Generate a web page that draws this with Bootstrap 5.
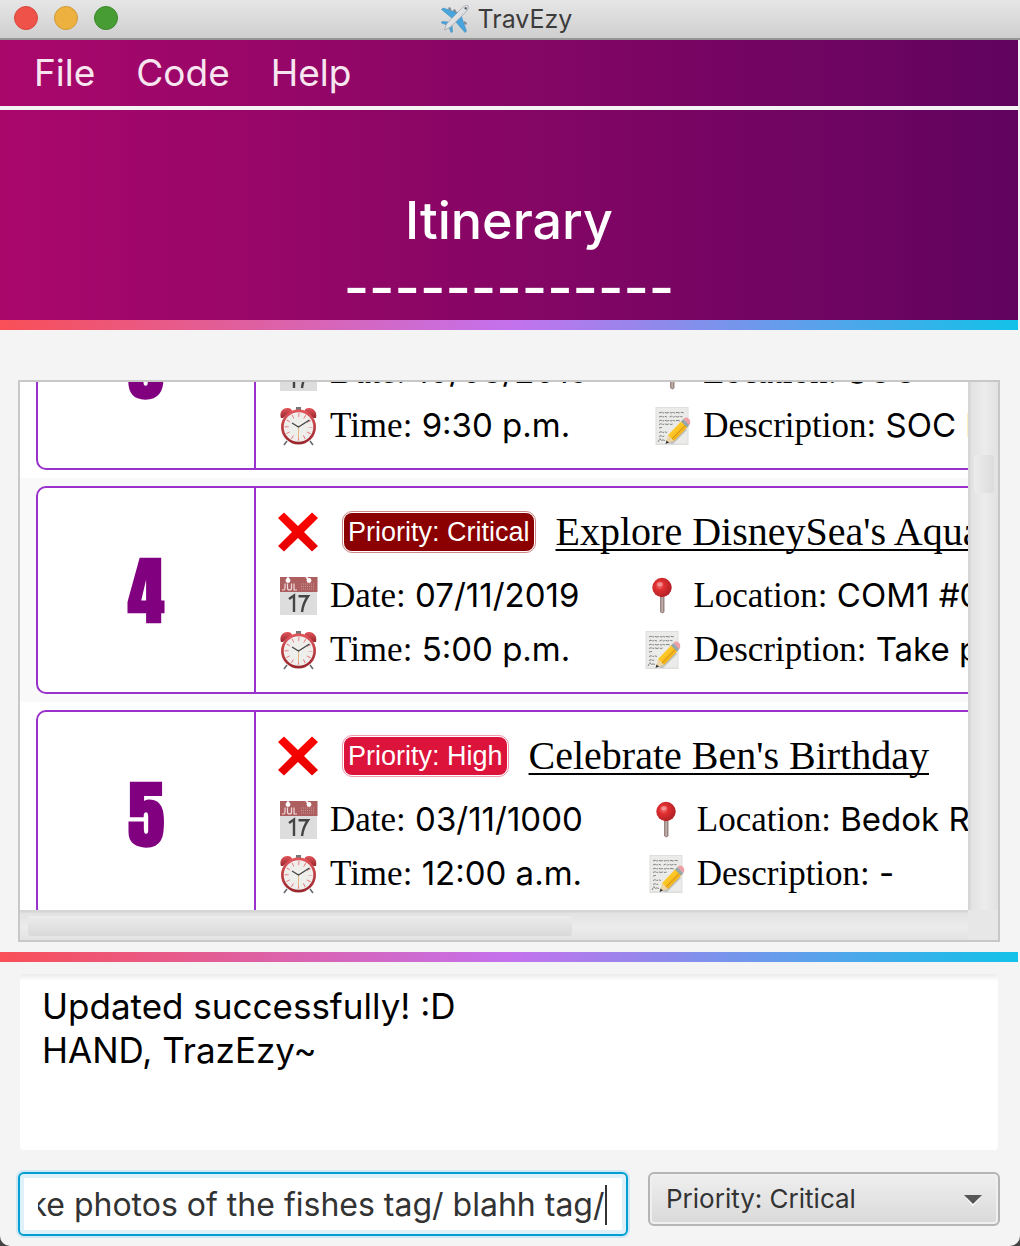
<!DOCTYPE html>
<html lang="en">
<head>
<meta charset="utf-8">
<meta name="viewport" content="width=device-width, initial-scale=1">
<title>TravEzy</title>
<link href="https://cdn.jsdelivr.net/npm/bootstrap@5.3.0/dist/css/bootstrap.min.css" rel="stylesheet">
<style>
  html { background: #444; }
  body { background: #444; font-family: Inter, Roboto, sans-serif; color: #000; }
  .app-window { background: #f4f4f4; min-height: 100vh; padding-right: 2px; border-radius: 0 0 10px 10px; overflow: hidden; }
  .title-bar { height: 40px; margin-right: -2px; padding-right: 8px; background: linear-gradient(#e6e6e6, #cfcfcf); border-bottom: 2px solid #959595; color: #3c3c3c; }
  .title-text { margin: 0; font-size: 25px; line-height: 38px; font-weight: 400; }
  .lights { left: 14px; top: 6px; gap: 16px; }
  .light { width: 24px; height: 24px; border-radius: 50%; border: 1px solid; padding: 0; }
  .light-red { background: #ee5249; border-color: #d8473f; }
  .light-amber { background: #ecb13e; border-color: #cf9a38; }
  .light-green { background: #479c33; border-color: #3c882b; }
  .aubergine { background: linear-gradient(90deg, #aa076b, #61045f); }
  .menu-strip { height: 66px; padding: 0 34px; gap: 41px; margin-bottom: 4px; }
  .menu-strip .nav-link { padding: 0; font-size: 37px; line-height: 66px; color: #f7e6f0; }
  .banner { height: 210px; padding-top: 78px; color: #fff; }
  .banner h1, .banner p { line-height: 66px; margin: 0; }
  .banner h1 { font-size: 52px; font-weight: 500; }
  .banner p { font-size: 55px; font-weight: 500; }
  .rainbow { height: 10px; background: linear-gradient(90deg, #f94f57, #c471ed, #12c2e9); }
  .list-frame { margin: 50px 18px 10px; border: 2px solid #c8c8c8; background: #fff; display: grid; grid-template: 528px 30px / minmax(0, 1fr) 30px; }
  .viewport { overflow: hidden; }
  .event-list { width: 174%; margin: -128px 0 0; padding: 0; list-style: none; }
  .event-row { height: 224px; padding: 8px 16px; background: #fff; }
  .event-row:nth-child(even) { background: #f9f9f9; }
  .event-box { height: 208px; border: 2px solid #9932cc; border-radius: 10px; background: #fff; overflow: hidden; }
  .event-number { flex: 0 0 218px; border-right: 2px solid #9932cc; color: #800080; font: 900 73px/206px Impact, Anton, "Roboto Condensed", Roboto, sans-serif; text-align: center; }
  .event-body { padding: 12px 22px; }
  .headline { height: 64px; margin-bottom: 5px; gap: 24px; }
  .priority { border-radius: 10px; border: 1px solid; padding: 1px; }
  .priority span { display: block; border-radius: 8px; padding: 0 4px; color: #fff; font: 27px/38px "Liberation Sans", sans-serif; }
  .critical { border-color: #c88; } .critical span { background: #8b0000; }
  .high { border-color: #ee9aaa; } .high span { background: #dc143c; }
  .event-title { margin: 0 0 0 -4px; font: 40px/64px "Liberation Serif", serif; text-decoration: underline; text-decoration-thickness: 2px; text-underline-offset: 4px; text-decoration-skip-ink: none; white-space: nowrap; }
  .facts { display: grid; grid-template-columns: max-content max-content; column-gap: 66px; }
  .fact { height: 54px; display: flex; align-items: center; gap: 12px; font-size: 33px; white-space: nowrap; }
  .fact b { font: 35px/54px "Liberation Serif", serif; }
  .fact svg { width: 40px; height: 40px; flex: none; }
  .fact .slim { width: 36px; }
  .bar-v { background: linear-gradient(90deg, #d6d6d6 2px, #e2e2e2 3px, #ececec 55%, #e2e2e2); }
  .bar-v i { display: block; width: 20px; height: 38px; margin: 73px 0 0 6px; border-radius: 3px; background: linear-gradient(90deg, #ececec, #dcdcdc); }
  .bar-h { background: linear-gradient(#d6d6d6 2px, #e2e2e2 3px, #ececec 55%, #e2e2e2); }
  .bar-h i { display: block; width: 57.4%; height: 20px; margin: 6px 0 0 8px; border-radius: 3px; background: linear-gradient(#ececec, #d9d9d9); }
  .bar-corner { background: #e7e7e7; }
  .result { display: block; width: auto; align-self: stretch; height: 176px; margin: 12px 20px 22px; padding: 10px 22px; border: 0; border-radius: 4px; resize: none; overflow: hidden; font-size: 35px; line-height: 44px; color: #000; background: linear-gradient(#ebebeb, #fff 7px); outline: 0; }
  .entry-row { padding: 0 18px; gap: 20px; }
  .command { height: 64px; min-width: 0; padding: 2px 19px 0 18px; border: 2px solid #039ed3; border-radius: 6px; background: #fff; box-shadow: 0 0 0 2px #cfe7f0, inset 0 0 0 4px #dff1f8; }
  .command input { min-width: 0; border: 0; outline: 0; padding: 0; background: none; font-size: 32px; line-height: 44px; color: #333; }
  .cursor { width: 2px; height: 40px; background: #333; }
  .priority-picker { position: relative; flex: 0 0 352px; height: 54px; }
  .priority-picker select { width: 100%; height: 54px; appearance: none; border: 2px solid #b5b5b5; border-radius: 6px; padding: 0 16px; font-size: 26px; line-height: 38px; color: #333; background: linear-gradient(#efefef, #d9d9d9); box-shadow: inset 0 0 0 2px #f0f0f0; }
  .priority-picker svg { position: absolute; right: 18px; top: 22px; width: 18px; height: 12px; pointer-events: none; }
</style>
<script src="https://cdn.jsdelivr.net/npm/bootstrap@5.3.0/dist/js/bootstrap.bundle.min.js"></script>
</head>
<body>
<svg width="0" height="0" class="position-absolute" aria-hidden="true">
  <defs>
    <linearGradient id="gRed" x1="0" y1="0" x2="0" y2="1"><stop offset="0" stop-color="#e4565c"/><stop offset="1" stop-color="#98262d"/></linearGradient>
    <radialGradient id="gPin" cx=".38" cy=".4" r=".65"><stop offset="0" stop-color="#f67a78"/><stop offset=".35" stop-color="#e02f31"/><stop offset="1" stop-color="#ae1f24"/></radialGradient>
    <linearGradient id="gPencil" x1="0" y1="0" x2="1" y2="1"><stop offset="0" stop-color="#ffe05a"/><stop offset=".5" stop-color="#fbc11e"/><stop offset="1" stop-color="#d98c10"/></linearGradient>
    <linearGradient id="gCross" x1="0" y1="0" x2="0" y2="1"><stop offset="0" stop-color="#ff0500"/><stop offset="1" stop-color="#e40000"/></linearGradient>
    <linearGradient id="gBody" x1="0" y1="0" x2="1" y2="1"><stop offset="0" stop-color="#fff"/><stop offset=".6" stop-color="#d9dadd"/><stop offset="1" stop-color="#8f9297"/></linearGradient>
  </defs>
  <symbol id="cross" viewBox="0 0 40 40"><path fill="url(#gCross)" d="M6 .5 20 14 34 .5 40 6 26 20 40 34 34 39.500 20 26 6 39.500 0 34 14 20 0 6z"/></symbol>
  <symbol id="calendar" viewBox="0 0 40 40">
    <path fill="#ddd" d="M2 1h37v38H2z"/><path fill="#ad5f60" d="M2 1h37.500v15H2z"/>
    <circle cx="10" cy="4.500" r="2.400" fill="#fff"/><circle cx="31" cy="4.500" r="2.400" fill="#fff"/>
    <path stroke="#fff" stroke-width="1.500" d="M10 0v4M28 1l3 3"/>
    <path fill="none" stroke="#f0dada" stroke-width="1.200" d="M7 7.500V12q0 2-1.500 2H4M9.500 7.500V12q0 2 2 2t2-2V7.500M16 7.500V14h3"/>
    <path stroke="#c99798" stroke-width="1" stroke-dasharray="1 1" d="M23 8h14M23 10.500h14M23 13h14"/>
    <path fill="none" stroke="#444" stroke-width="2.400" d="M11 23l5-3.500V36M20.500 20.200h9.500q-5 7-6 15.800"/>
  </symbol>
  <symbol id="alarm" viewBox="0 0 40 40">
    <path stroke="#666b73" stroke-width="1.600" d="M9 35l-3 4M32 35l3 4"/>
    <path fill="#777" d="M18 1h5v4h-5z"/>
    <path fill="url(#gRed)" d="M3 12C1 6 5 1.500 10 2c2 .2 3.500 1 4 2.500L5 12zM38 12c1.500-6-2.500-10.500-7.500-10-2 .2-3.500 1-4 2.500l9 7.500z"/>
    <circle cx="20.500" cy="21" r="17.500" fill="url(#gRed)"/><circle cx="20.500" cy="21" r="14.800" fill="#eeeeec"/>
    <circle cx="20.500" cy="21" r="11.800" fill="none" stroke="#e9666a" stroke-width="4" stroke-dasharray=".8 5.378" stroke-dashoffset=".4"/>
    <path stroke="#e3b982" d="M20.500 21v11"/><path stroke="#444" stroke-width="1.300" fill="none" d="M14 17l6.500 4 11-7"/>
  </symbol>
  <symbol id="pin" viewBox="0 0 36 40"><path fill="#9b8580" d="M15 19h4.500v17l-2 1.500L15 36z"/><path fill="#c8bab5" d="M16.500 20h1.300v16h-1.300z"/><circle cx="17" cy="11.500" r="9.700" fill="url(#gPin)"/><ellipse cx="15" cy="8" rx="3" ry="2" fill="#fff" opacity=".3"/></symbol>
  <symbol id="memo" viewBox="0 0 36 40">
    <path fill="#dededc" d="M.5 1H33.500v38H.5z"/><path fill="#ebebe9" d="M1.500 2h31v35.500h-31z"/>
    <g fill="none" stroke="#777" stroke-width=".9" stroke-dasharray="3 .6 2 .8 4 1">
      <path d="M4 7l2-.8 2 .8 2-.6 2 .6 2-.6 2 .6 2-.6 2 .6 2-.6 2 .6 2-.6 3 .4"/>
      <path d="M4 11l2-.8 2 .8 2-.6 2 .6M14.500 11l2-.8 2 .8 2-.6 2 .6 2-.6 3 .4"/>
      <path d="M4 15l2-.8 2 .8 2-.6 2 .6 2-.6 2 .6 2-.6 2 .6 2-.6 3 .6"/>
      <path d="M4 18.500l2-.8 2 .8 2-.6 2 .6 2-.6 2 .6 2-.6"/>
      <path d="M4 22l3-.6M4 26.500l2-.8 2 .8 2-.6 2 .6"/>
      <path d="M4 30.500l2-.8 2 .8 2-.6M3 36l2-3.500 1 2 2-.6 2 .6"/>
    </g>
    <path fill="#8b8b88" opacity=".45" d="M12 37l6 1 14-14-2-2z"/>
    <path fill="#efd5a4" d="M11 37l2-8 6 6z"/><path fill="#333" d="M10.500 38l1-3.500 2.500 2z"/>
    <path fill="url(#gPencil)" d="M13 29 27 14.500l6 6L19 35z"/><path stroke="#d18a18" stroke-width="1" d="M17 33l14-14.500"/>
    <path fill="#94a7ad" d="M26 15.500l2.500-2.500 6 6-2.500 2.500z"/><path fill="#eda0a6" d="M28.500 13q2.500-2.500 5-.5t1.500 5.500l-1 1z"/>
  </symbol>
  <symbol id="plane" viewBox="0 0 28 28">
    <path fill="#48a4dc" stroke="#3a86b8" stroke-width=".5" d="M18 8 2 3 .5 4.500 12 14zM20 10l5.500 16-1.500 1.500L14 16zM8 17l-7-.5-.5 1.500L6 20zM11 20l.5 7-1.500.5L8 22z"/>
    <path fill="#7d8790" d="M7 3l2-1 1.500 3-2 .5zM12 5l2-1 1.500 3-2 .5zM25 20l1-2-3-2v2.500z"/>
    <path fill="url(#gBody)" stroke="#8f969c" stroke-width=".6" d="M27 .5c1 2-.5 5-3 7.500L9 22.500 3.500 25l2-6L20 4c2.500-2.500 5-4.500 7-3.500z"/>
    <path fill="#4f5961" d="M23 3l2-1 1 1-.8 2z"/>
  </symbol>
</svg>

<main class="app-window d-flex flex-column">
  <header class="title-bar position-relative d-flex justify-content-center align-items-center gap-2">
    <div class="lights position-absolute d-flex">
      <button class="light light-red" type="button" aria-label="Close"></button>
      <button class="light light-amber" type="button" aria-label="Minimise"></button>
      <button class="light light-green" type="button" aria-label="Zoom"></button>
    </div>
    <svg width="30" height="28" aria-hidden="true"><use href="#plane"/></svg>
    <p class="title-text">TravEzy</p>
  </header>

  <nav class="menu-strip aubergine nav flex-nowrap" aria-label="Main">
    <a class="nav-link" href="#">File</a>
    <a class="nav-link" href="#">Code</a>
    <a class="nav-link" href="#">Help</a>
  </nav>

  <section class="banner aubergine text-center">
    <h1>Itinerary</h1>
    <p>-------------</p>
  </section>
  <div class="rainbow"></div>

  <section class="list-frame" aria-label="Events">
    <div class="viewport">
      <ol class="event-list">
        <li class="event-row">
          <article class="event-box d-flex">
            <div class="event-number">3</div>
            <div class="event-body">
              <div class="headline d-flex align-items-center">
                <svg width="40" height="40" aria-hidden="true"><use href="#cross"/></svg>
                <div class="priority high"><span>Priority: High</span></div>
                <h2 class="event-title">Orientation</h2>
              </div>
              <div class="facts">
                <div class="fact"><svg><use href="#calendar"/></svg><span><b>Date:</b> 10/08/2019</span></div>
                <div class="fact"><svg class="slim"><use href="#pin"/></svg><span><b>Location:</b> SOC</span></div>
                <div class="fact"><svg><use href="#alarm"/></svg><span><b>Time:</b> 9:30 p.m.</span></div>
                <div class="fact"><svg class="slim"><use href="#memo"/></svg><span><b>Description:</b> SOC Event</span></div>
              </div>
            </div>
          </article>
        </li>
        <li class="event-row">
          <article class="event-box d-flex">
            <div class="event-number">4</div>
            <div class="event-body">
              <div class="headline d-flex align-items-center">
                <svg width="40" height="40" aria-hidden="true"><use href="#cross"/></svg>
                <div class="priority critical"><span>Priority: Critical</span></div>
                <h2 class="event-title">Explore DisneySea's Aquarium</h2>
              </div>
              <div class="facts">
                <div class="fact"><svg><use href="#calendar"/></svg><span><b>Date:</b> 07/11/2019</span></div>
                <div class="fact"><svg class="slim"><use href="#pin"/></svg><span><b>Location:</b> COM1 #01</span></div>
                <div class="fact"><svg><use href="#alarm"/></svg><span><b>Time:</b> 5:00 p.m.</span></div>
                <div class="fact"><svg class="slim"><use href="#memo"/></svg><span><b>Description:</b> Take photos of the fishes</span></div>
              </div>
            </div>
          </article>
        </li>
        <li class="event-row">
          <article class="event-box d-flex">
            <div class="event-number">5</div>
            <div class="event-body">
              <div class="headline d-flex align-items-center">
                <svg width="40" height="40" aria-hidden="true"><use href="#cross"/></svg>
                <div class="priority high"><span>Priority: High</span></div>
                <h2 class="event-title">Celebrate Ben's Birthday</h2>
              </div>
              <div class="facts">
                <div class="fact"><svg><use href="#calendar"/></svg><span><b>Date:</b> 03/11/1000</span></div>
                <div class="fact"><svg class="slim"><use href="#pin"/></svg><span><b>Location:</b> Bedok Reservoir</span></div>
                <div class="fact"><svg><use href="#alarm"/></svg><span><b>Time:</b> 12:00 a.m.</span></div>
                <div class="fact"><svg class="slim"><use href="#memo"/></svg><span><b>Description:</b> -</span></div>
              </div>
            </div>
          </article>
        </li>
      </ol>
    </div>
    <div class="bar-v d-flex align-items-start"><i></i></div>
    <div class="bar-h d-flex align-items-start"><i></i></div>
    <div class="bar-corner"></div>
  </section>
  <div class="rainbow"></div>

  <textarea class="result" readonly aria-label="Result">Updated successfully! :D
HAND, TrazEzy~</textarea>

  <form class="entry-row d-flex align-items-start">
    <div class="command d-flex align-items-center flex-fill">
      <input id="command" class="flex-fill" type="text" aria-label="Command" value="edit 4 desc/Take photos of the fishes tag/ blahh tag/">
      <span class="cursor"></span>
    </div>
    <div class="priority-picker">
      <select aria-label="Priority"><option>Priority: Critical</option><option>Priority: High</option></select>
      <svg viewBox="0 0 18 12" aria-hidden="true"><path fill="#fff" d="M2 4h14L9 12z"/><path fill="#555" d="M0 1h18L9 10z"/></svg>
    </div>
  </form>
</main>
<script>
  // Keep the end of a long command in view.
  const field = document.getElementById('command');
  field.scrollLeft = field.scrollWidth;
</script>
</body>
</html>
